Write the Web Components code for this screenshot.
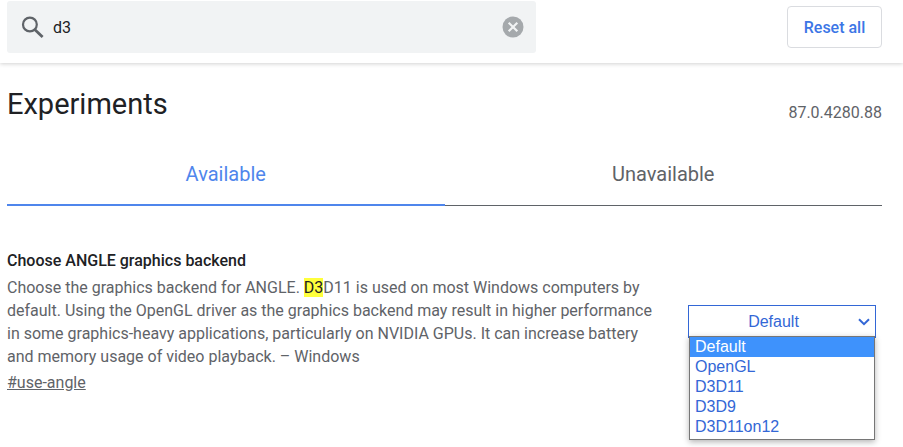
<!DOCTYPE html>
<html lang="en">
<head>
<meta charset="utf-8">
<title>Experiments</title>
<style>
body { margin: 0; min-height: 100vh; background: #fff; color: #202124; font: 16px/23px Roboto, "Liberation Sans", sans-serif; }
</style>
</head>
<body>
<flags-app></flags-app>
<script>
const define = (name, html, setup) => {
  const template = document.createElement('template');
  template.innerHTML = html;
  customElements.define(name, class extends HTMLElement {
    constructor() {
      super();
      this.attachShadow({ mode: 'open' }).append(template.content.cloneNode(true));
      if (setup) setup(this);
    }
  });
};

define('search-field', `
<style>
:host { display: flex; align-items: center; flex: 0 1 529px; height: 52px; box-sizing: border-box; padding: 0 12px 0 14px; gap: 9px; background: #f1f3f4; border-radius: 3px; }
svg { display: block; flex: none; }
input { flex: 1; min-width: 0; border: 0; padding: 0; outline: 0; background: none; color: #202124; font: inherit; }
button { border: 0; padding: 0; background: none; }
</style>
<svg width="23" height="23" viewBox="0 0 23 23" fill="none" stroke="#5f6368" stroke-width="2.2" aria-hidden="true"><circle cx="8.9" cy="8.5" r="6.9"/><path d="M13.7 13.4L21.6 21.1" stroke-width="2.8"/></svg>
<input type="text" aria-label="Search flags" value="d3">
<button type="button" aria-label="Clear search"><svg width="22" height="22" viewBox="0 0 22 22"><circle cx="11" cy="11" r="10.5" fill="#a5a9ac"/><path d="M6.7 6.7l8.6 8.6M15.3 6.7l-8.6 8.6" stroke="#f1f3f4" stroke-width="2.2"/></svg></button>
`);

define('action-button', `
<style>
:host { display: block; flex: none; }
button { box-sizing: border-box; min-width: 95px; height: 42px; padding: 0 15px; border: 1px solid #dadce0; border-radius: 4px; background: #fff; color: #3c76e6; font: inherit; font-weight: 500; }
</style>
<button type="button"><slot></slot></button>
`);

define('page-header', `
<style>
:host { display: flex; align-items: center; justify-content: space-between; gap: 20px; padding: 1px 21px 10px 7px; background: #fff; box-shadow: 0 1px 4px rgba(0,0,0,.18); }
</style>
<slot></slot>
`);

define('page-title', `
<style>
:host { display: flex; align-items: flex-end; justify-content: space-between; }
h1 { margin: 0; font-size: 29px; line-height: 40px; font-weight: 400; color: #202124; }
span { color: #5f6368; }
</style>
<h1><slot></slot></h1><span><slot name="version"></slot></span>
`);

define('tab-bar', `
<style>
:host { display: grid; grid-template-columns: 1fr 1fr; margin-top: 20px; }
button { box-sizing: border-box; height: 62px; padding: 0; border: 0; border-bottom: 1px solid #5f6368; background: none; color: #5f6368; font: inherit; font-size: 20px; }
button[aria-selected=true] { border-bottom: 2px solid #4f86ec; color: #4f86ec; }
</style>
<div role="tablist" style="display: contents"><button type="button" role="tab" aria-selected="true">Available</button><button type="button" role="tab" aria-selected="false">Unavailable</button></div>
`);

define('option-menu', `
<style>
:host { display: block; position: relative; color: #3367d6; font: 16px/20px "Liberation Sans", Arial, sans-serif; }
select { display: block; appearance: none; box-sizing: border-box; width: 100%; height: 33px; border: 1px solid #3367d6; border-radius: 0; padding: 0 17px 0 0; outline: 0; background: #fff; color: inherit; font: inherit; text-align: center; text-align-last: center; }
svg { position: absolute; right: 6px; top: 13px; pointer-events: none; }
ul { position: absolute; box-sizing: border-box; left: 1px; right: 1px; top: 31px; margin: 0; padding: 0 0 2px; list-style: none; border: 1px solid #767676; background: #fff; box-shadow: 0 2px 6px rgba(0,0,0,.3); }
li { padding: 0 5px; }
li[aria-selected=true] { background: #3e92fc; color: #fff; }
</style>
<select aria-label="Graphics backend"></select>
<svg width="12" height="8" viewBox="0 0 12 8" fill="none" stroke="#3367d6" stroke-width="2" aria-hidden="true"><path d="M1 1.2l5 5 5-5"/></svg>
<ul role="listbox"></ul>
`, host => {
  const select = host.shadowRoot.querySelector('select');
  const list = host.shadowRoot.querySelector('ul');
  ['Default', 'OpenGL', 'D3D11', 'D3D9', 'D3D11on12'].forEach((name, i) => {
    select.add(new Option(name));
    const li = document.createElement('li');
    li.setAttribute('role', 'option');
    li.setAttribute('aria-selected', i === 0);
    li.textContent = name;
    list.append(li);
  });
});

define('flag-entry', `
<style>
:host { display: grid; grid-template-columns: 1fr 188px; align-items: center; gap: 20px; padding: 43px 6px 0 0; }
h2 { margin: 0 0 4px; font-size: 16px; line-height: 23px; font-weight: 500; color: #202124; }
p { margin: 0 0 3px; color: #5f6368; }
</style>
<div><h2><slot name="title"></slot></h2><p><slot></slot></p><slot name="link"></slot></div>
<option-menu></option-menu>
`);

define('flags-app', `
<style>
:host { display: block; }
main { padding: 21px 21px 0 7px; }
mark { background: #ffff3c; color: #202124; }
a { color: #5f6368; }
</style>
<page-header><search-field></search-field><action-button>Reset all</action-button></page-header>
<main>
<page-title>Experiments<span slot="version">87.0.4280.88</span></page-title>
<tab-bar></tab-bar>
<flag-entry><span slot="title">Choose ANGLE graphics backend</span>Choose the graphics backend for ANGLE. <mark>D3</mark>D11 is used on most Windows computers by default. Using the OpenGL driver as the graphics backend may result in higher performance in some graphics-heavy applications, particularly on NVIDIA GPUs. It can increase battery and memory usage of video playback. – Windows<a slot="link" href="#use-angle">#use-angle</a></flag-entry>
</main>
`);
</script>
</body>
</html>
